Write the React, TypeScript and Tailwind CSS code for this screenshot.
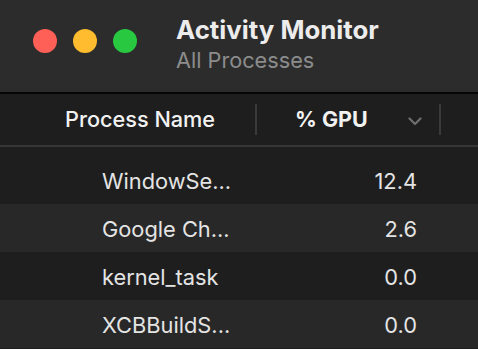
import React from "react";

const rows = [
  { name: "WindowSe...", gpu: "12.4" },
  { name: "Google Ch...", gpu: "2.6" },
  { name: "kernel_task", gpu: "0.0" },
  { name: "XCBBuildS...", gpu: "0.0" },
];

export default function App() {
  return (
    <div
      className="w-[478px] h-[349px] overflow-hidden bg-[#1e1e1e] flex flex-col"
      style={{ fontFamily: "Inter, 'Liberation Sans', sans-serif" }}
    >
      {/* Title bar */}
      <div className="h-[92px] shrink-0 bg-[#2c2c2c] flex items-start">
        <div className="flex gap-[16px] pl-[33px] pt-[29px]">
          <div className="w-[24px] h-[24px] rounded-full bg-[#fe5f57]" />
          <div className="w-[24px] h-[24px] rounded-full bg-[#febc2e]" />
          <div className="w-[24px] h-[24px] rounded-full bg-[#28c840]" />
        </div>
        <div className="pl-[39px] pt-[15px] flex flex-col">
          <div className="text-[25.8px] leading-[30px] font-bold text-[#ececec]">
            Activity Monitor
          </div>
          <div className="text-[21.7px] leading-[24px] text-[#8c8c8c] mt-[3px]">
            All Processes
          </div>
        </div>
      </div>
      <div className="h-[2px] shrink-0 bg-[#050505]" />
      {/* Header */}
      <div className="h-[51px] shrink-0 bg-[#1e1e1e] flex items-center">
        <div className="w-[255px] pl-[65px] text-[21.7px] font-medium text-[#f2f2f2]">
          Process Name
        </div>
        <div className="w-[2px] h-[31px] bg-[#3a3a3a]" />
        <div className="w-[182px] flex items-center">
          <div className="pl-[38px] text-[21.5px] font-bold text-[#f2f2f2]">% GPU</div>
          <svg
            width="14"
            height="9"
            viewBox="0 0 14 9"
            className="ml-auto mr-[17px] mt-[3px]"
          >
            <path
              d="M1.5 1.5 L7 7 L12.5 1.5"
              fill="none"
              stroke="#6e6e6e"
              strokeWidth="2.2"
              strokeLinecap="round"
              strokeLinejoin="round"
            />
          </svg>
        </div>
        <div className="w-[2px] h-[31px] bg-[#3a3a3a]" />
      </div>
      <div className="h-[2px] shrink-0 bg-[#363636]" />
      {/* Rows */}
      <div className="flex flex-col">
        <div className="h-[9px] bg-[#1e1e1e]" />
        {rows.map((r, i) => (
          <div
            key={r.name}
            className={`h-[48px] flex items-center pt-[3px] ${
              i % 2 === 0 ? "bg-[#1e1e1e]" : "bg-[#282828]"
            }`}
          >
            <div className="w-[255px] pl-[102px] text-[21.8px] text-[#e4e4e4]">
              {r.name}
            </div>
            <div className="w-[162px] text-right text-[21.8px] text-[#e4e4e4]">
              {r.gpu}
            </div>
          </div>
        ))}
      </div>
    </div>
  );
}
